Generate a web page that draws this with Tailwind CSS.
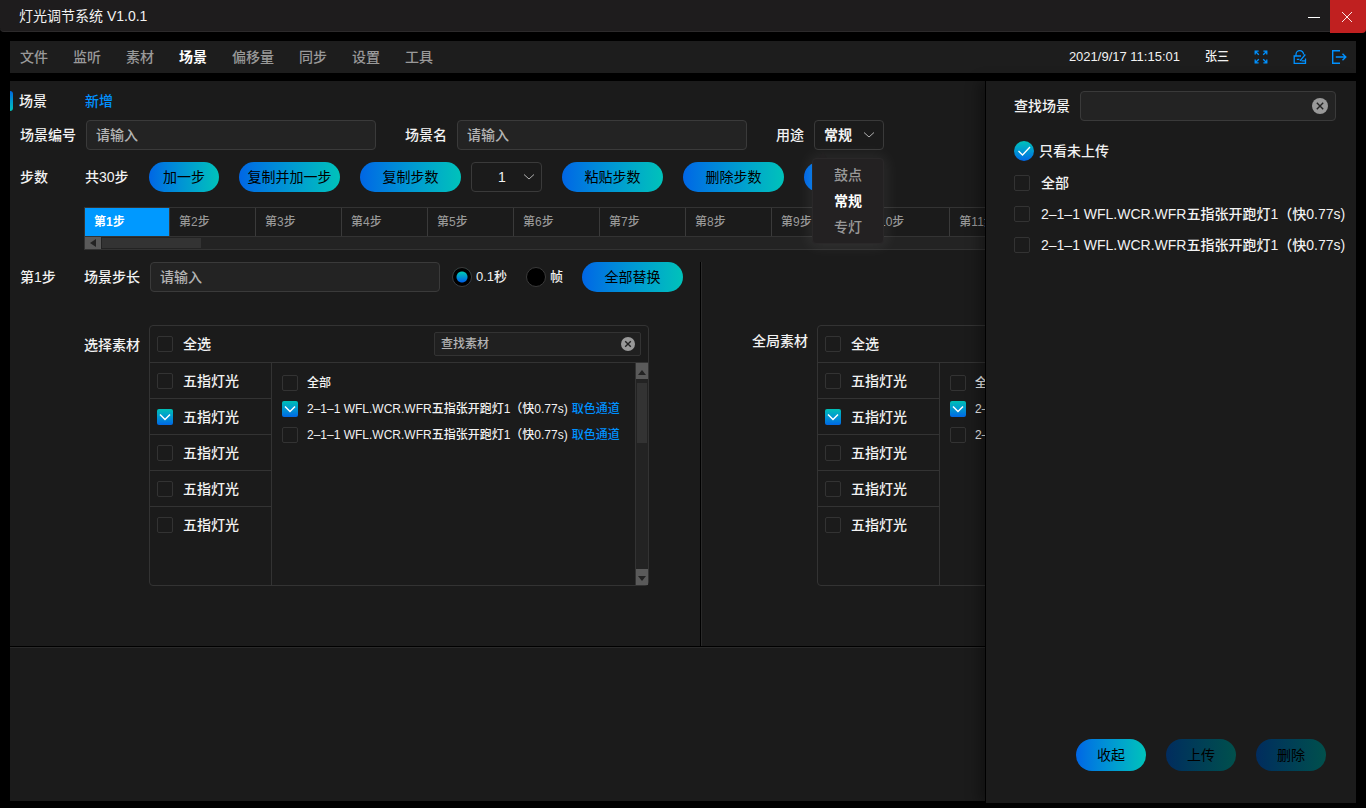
<!DOCTYPE html>
<html lang="zh-CN">
<head>
<meta charset="utf-8">
<meta name="viewport" content="width=device-width, initial-scale=1">
<title>灯光调节系统 V1.0.1</title>
<script src="https://cdn.jsdelivr.net/npm/@tailwindcss/browser@4"></script>
</head>
<body class="flex h-screen flex-col overflow-hidden bg-black font-['Liberation_Sans','Noto_Sans_CJK_SC',sans-serif] text-sm/5 font-medium text-[#f2f2f2]">

<header class="flex h-8 shrink-0 items-start justify-between rounded-b border-b border-[#2c2a2b] bg-[#1e1c1d]">
  <h1 class="pl-[19px] text-sm/8 font-normal">灯光调节系统 V1.0.1</h1>
  <div class="flex">
    <button type="button" aria-label="最小化" class="grid h-[33px] w-8 place-items-center">
      <span class="mt-0.5 h-px w-3 bg-white"></span>
    </button>
    <button type="button" aria-label="关闭" class="grid h-[33px] w-9 place-items-center rounded-br bg-[#c02020]">
      <svg class="mr-0.5 h-3 w-3" viewBox="0 0 12 12" fill="none" stroke="#fff" stroke-width="0.9"><path d="M1 1l10 10M11 1L1 11"/></svg>
    </button>
  </div>
</header>

<nav class="mx-2.5 mt-[9px] flex h-8 shrink-0 items-center justify-between bg-[#1d1d1d] pr-[9px] pl-2.5">
  <div class="flex gap-[25px] text-[#999]">
    <a href="#">文件</a><a href="#">监听</a><a href="#">素材</a><a href="#" class="font-bold text-white">场景</a><a href="#">偏移量</a><a href="#">同步</a><a href="#">设置</a><a href="#">工具</a>
  </div>
  <div class="flex items-center text-[13px]/5">
    <time>2021/9/17 11:15:01</time>
    <span class="ml-[25px] text-xs/5">张三</span>
    <button type="button" aria-label="全屏" class="ml-6 text-[#0091ff]">
      <svg class="h-4 w-4" viewBox="0 0 16 16" fill="none" stroke="currentColor" stroke-width="1.3"><path d="M2.200 5.600V2.200h3.400M2.200 2.200l3.600 3.600M10.400 2.200h3.400v3.400M13.800 2.200l-3.600 3.600M2.200 10.400v3.400h3.400M2.200 13.800l3.600-3.600M13.800 10.400v3.400h-3.400M13.800 13.800l-3.600-3.600"/></svg>
    </button>
    <button type="button" aria-label="修改密码" class="ml-[23px] text-[#0091ff]">
      <svg class="h-4 w-4" viewBox="0 0 16 16" fill="none" stroke="currentColor" stroke-width="1.300"><path d="M4 7V5.500a3.800 3.800 0 0 1 7.600 0M9 7H2.200v7.300h11.300V9.500M4.800 10.300h2.600M13.300 5.500L8 11.800M9.500 11.800H14"/></svg>
    </button>
    <button type="button" aria-label="退出" class="ml-[23px] text-[#0091ff]">
      <svg class="h-4 w-4" viewBox="0 0 16 16" fill="none" stroke="currentColor" stroke-width="1.400"><path d="M9 1.700H1.700v12.600H9M4.800 8h10M11.500 4.700L14.800 8l-3.300 3.300"/></svg>
    </button>
  </div>
</nav>

<main class="relative mx-2.5 mt-2 mb-[7px] flex min-h-0 flex-1 flex-col bg-[#1b1b1b]">
  <div class="flex min-h-0 flex-1 flex-col overflow-hidden pt-2.5">
    <div class="flex h-5 items-center">
      <span class="h-5 w-[3px] rounded-r-sm bg-linear-to-b from-[#0066e0] to-[#00c2b8]"></span>
      <h2 class="w-[72px] pl-1.5">场景</h2>
      <a href="#" class="text-[#0091ff]">新增</a>
    </div>

    <form class="mt-[9px] flex h-[30px] shrink-0 items-center pl-2.5">
      <label for="sceneNo" class="w-[66px]">场景编号</label>
      <input id="sceneNo" placeholder="请输入" class="h-[30px] w-[290px] rounded border border-[#3a3a3a] bg-[#232323] px-[9px] outline-none placeholder:text-[#b3b3b3]">
      <label for="sceneName" class="ml-[29px] w-[52px]">场景名</label>
      <input id="sceneName" placeholder="请输入" class="h-[30px] w-[290px] rounded border border-[#3a3a3a] bg-[#232323] px-[9px] outline-none placeholder:text-[#b3b3b3]">
      <label for="usage" class="ml-[29px] w-[38px]">用途</label>
      <div class="relative">
        <div class="grid items-center">
          <select id="usage" class="col-start-1 row-start-1 h-[30px] w-[70px] appearance-none rounded border border-[#3a3a3a] bg-[#1b1b1b] pl-[9px] font-bold outline-none"><option>鼓点</option><option selected>常规</option><option>专灯</option></select>
          <svg class="pointer-events-none col-start-1 row-start-1 mr-[9px] h-2 w-3 justify-self-end" viewBox="0 0 12 8" fill="none" stroke="#b0b0b0"><path d="M1 1.500l5 4.500 5-4.500"/></svg>
        </div>
        <div class="absolute top-8 -left-0.5 z-10 w-[72px] text-[#999]">
          <svg class="ml-[7px] h-1.5 w-2" viewBox="0 0 8 6" fill="#232122"><path d="M4 0l4 6H0z"/></svg>
          <ul class="rounded-sm border border-[#2a2829] bg-[#232122] py-[3px] text-center shadow-[0_0_16px_2px_rgba(255,255,255,0.08)]">
            <li class="leading-[26px]">鼓点</li>
            <li class="leading-[26px] font-bold text-white">常规</li>
            <li class="leading-[26px]">专灯</li>
          </ul>
        </div>
      </div>
    </form>

    <div class="mt-3 flex h-[30px] shrink-0 items-center pl-2.5">
      <span class="w-[65px]">步数</span>
      <span class="w-16">共30步</span>
      <button type="button" class="h-[30px] w-[70px] rounded-full bg-linear-to-r from-[#0066e5] to-[#00c2ba] font-normal text-black">加一步</button>
      <button type="button" class="ml-5 h-[30px] w-[101px] rounded-full bg-linear-to-r from-[#0066e5] to-[#00c2ba] font-normal text-black">复制并加一步</button>
      <button type="button" class="ml-5 h-[30px] w-[101px] rounded-full bg-linear-to-r from-[#0066e5] to-[#00c2ba] font-normal text-black">复制步数</button>
      <div class="ml-2.5 grid items-center">
        <select aria-label="复制数量" class="col-start-1 row-start-1 h-[30px] w-[71px] appearance-none rounded border border-[#3a3a3a] bg-[#1b1b1b] pl-[26px] outline-none"><option>1</option><option>2</option><option>3</option></select>
        <svg class="pointer-events-none col-start-1 row-start-1 mr-[7px] h-2 w-3 justify-self-end" viewBox="0 0 12 8" fill="none" stroke="#b0b0b0"><path d="M1 1.500l5 4.500 5-4.500"/></svg>
      </div>
      <button type="button" class="ml-5 h-[30px] w-[101px] rounded-full bg-linear-to-r from-[#0066e5] to-[#00c2ba] font-normal text-black">粘贴步数</button>
      <button type="button" class="ml-5 h-[30px] w-[101px] rounded-full bg-linear-to-r from-[#0066e5] to-[#00c2ba] font-normal text-black">删除步数</button>
      <button type="button" aria-label="更多" class="ml-5 h-[30px] w-[70px] rounded-full bg-linear-to-r from-[#0066e5] to-[#00c2ba]"></button>
    </div>

    <div class="mt-[15px] ml-[74px] shrink-0 overflow-hidden border border-[#333]">
      <div id="steps" class="flex h-7 text-xs/7 text-[#999]"></div>
      <div class="flex h-[13px] border-t border-[#333] bg-[#232323]">
        <button type="button" aria-label="向左滚动" class="grid h-3 w-4 place-items-center bg-[#5a5a5a]"><svg class="h-2 w-1.5" viewBox="0 0 6 8" fill="#232323"><path d="M6 0v8L0 4z"/></svg></button>
        <span class="mt-px ml-px h-2.5 w-[99px] bg-[#333]"></span>
      </div>
    </div>

    <div class="mt-3 flex shrink-0 border-b border-black">
      <section class="flex h-[384px] w-[691px] shrink-0 flex-col border-r border-black">
        <div class="flex h-[30px] items-center pl-2.5">
          <span class="w-16">第1步</span>
          <label for="stepLen" class="w-[66px]">场景步长</label>
          <input id="stepLen" placeholder="请输入" class="h-[30px] w-[290px] rounded border border-[#3a3a3a] bg-[#232323] px-[9px] outline-none placeholder:text-[#b3b3b3]">
          <label class="ml-3 flex w-[74px] items-center gap-1 text-[13px]/5"><input type="radio" name="unit" checked class="h-5 w-5 appearance-none rounded-full border border-[#3a3a3a] bg-[radial-gradient(circle,transparent_5px,#000_6px),linear-gradient(#00c2b8_25%,#0066e5_75%)]">0.1秒</label>
          <label class="flex w-14 items-center gap-1 text-[13px]/5"><input type="radio" name="unit" class="h-5 w-5 appearance-none rounded-full border border-[#3a3a3a] bg-black">帧</label>
          <button type="button" class="h-[30px] w-[101px] rounded-full bg-linear-to-r from-[#0066e5] to-[#00c2ba] font-normal text-black">全部替换</button>
        </div>
        <div class="mt-[33px] flex pl-[74px]">
          <span class="w-[65px] pt-2.5">选择素材</span>
          <div data-picker></div>
        </div>
      </section>
      <section class="min-w-0 flex-1 overflow-hidden border-l border-[#2a2a2a]">
        <div class="mt-[63px] flex pl-[50px]">
          <span class="w-[65px] shrink-0 pt-1.5">全局素材</span>
          <div data-picker></div>
        </div>
      </section>
    </div>
    <div class="flex-1 border-t border-[#2a2a2a]"></div>
  </div>

  <aside class="absolute top-0 right-0 -bottom-0.5 flex w-[371px] flex-col border-l border-black bg-[#1b1b1b] pt-2.5 shadow-[-6px_0_12px_rgba(0,0,0,0.35)]">
    <div class="flex items-center pr-5 pl-7">
      <label for="findScene" class="w-[66px]">查找场景</label>
      <div class="flex h-[30px] flex-1 items-center rounded border border-[#3a3a3a] bg-[#232323] pr-[7px] pl-[9px]">
        <input id="findScene" class="min-w-0 flex-1 bg-transparent outline-none">
        <button type="button" aria-label="清除"><svg class="h-4 w-4" viewBox="0 0 16 16"><circle cx="8" cy="8" r="8" fill="#999"/><path d="M4.800 4.800l6.400 6.400M11.200 4.800l-6.400 6.400" stroke="#232323" stroke-width="1.400"/></svg></button>
      </div>
    </div>
    <label class="mt-5 flex items-center gap-[5px] pl-7">
      <span class="grid">
        <input type="checkbox" checked class="col-start-1 row-start-1 h-5 w-5 appearance-none rounded-full bg-linear-to-b from-[#00c2b8] to-[#0066e5]">
        <svg class="pointer-events-none col-start-1 row-start-1 h-5 w-5" viewBox="0 0 20 20" fill="none" stroke="#fff" stroke-width="1.300"><path d="M4.500 10l4 4 7.500-8"/></svg>
      </span>只看未上传
    </label>
    <ul id="uploads" class="mt-1.5 pl-7"></ul>
    <div class="mt-auto flex justify-end gap-5 pr-[30px] pb-8">
      <button type="button" class="h-8 w-[70px] rounded-full bg-linear-to-r from-[#0066e5] to-[#00c2ba] font-normal text-black">收起</button>
      <button type="button" disabled class="h-8 w-[70px] rounded-full bg-linear-to-r from-[#022c5e] to-[#02504c] font-normal text-black">上传</button>
      <button type="button" disabled class="h-8 w-[70px] rounded-full bg-linear-to-r from-[#022c5e] to-[#02504c] font-normal text-black">删除</button>
    </div>
  </aside>
</main>

<script>
const effect = '2–1–1 WFL.WCR.WFR五指张开跑灯1（快0.77s)';
const box = on => `<span class="grid"><input type="checkbox" ${on ? 'checked' : ''} class="col-start-1 row-start-1 h-4 w-4 appearance-none rounded-xs border border-[#333] checked:border-0 checked:bg-linear-to-b checked:from-[#00bfb5] checked:to-[#0066e5]">${on ? '<svg class="pointer-events-none col-start-1 row-start-1 h-4 w-4" viewBox="0 0 16 16" fill="none" stroke="#fff" stroke-width="1.500"><path d="M3 5.500l5 5 5-5"/></svg>' : ''}</span>`;

document.getElementById('steps').innerHTML = Array.from({length: 11}, (_, i) =>
  `<button type="button" class="${i ? 'min-w-[86px] shrink-0 border-l border-[#3a3a3a] pr-[45px] pl-[9px] text-left' : 'w-[84px] shrink-0 bg-[#0099ff] pl-[9px] text-left font-bold text-white'}">第${i + 1}步</button>`).join('');

document.getElementById('uploads').innerHTML = ['全部', effect, effect].map(t =>
  `<li><label class="flex h-[31px] items-center gap-[11px] whitespace-nowrap">${box(false)}${t}</label></li>`).join('');

const link = '<a href="#" class="ml-1 text-[#0091ff]">取色通道</a>';
const picker = `
<div class="flex h-[261px] w-[500px] flex-col rounded border border-[#333]">
  <div class="flex h-[37px] shrink-0 items-center justify-between border-b border-[#333] pr-[7px] pl-[7px]">
    <label class="flex items-center gap-2.5">${box(false)}全选</label>
    <div class="flex h-6 w-[207px] items-center rounded-xs border border-[#333] bg-[#202020] pr-[5px] pl-1.5">
      <input aria-label="查找素材" placeholder="查找素材" class="min-w-0 flex-1 bg-transparent text-xs outline-none placeholder:text-[#b3b3b3]">
      <button type="button" aria-label="清除"><svg class="h-3.5 w-3.5" viewBox="0 0 16 16"><circle cx="8" cy="8" r="8" fill="#999"/><path d="M4.800 4.800l6.400 6.400M11.200 4.800l-6.400 6.400" stroke="#232323" stroke-width="1.600"/></svg></button>
    </div>
  </div>
  <div class="flex min-h-0 flex-1">
    <ul class="w-[122px] border-r border-[#333]">${[0, 1, 0, 0, 0].map(on =>
      `<li class="h-9 border-b border-[#333] pl-[7px] last:border-b-0"><label class="flex h-full items-center gap-2.5">${box(on)}五指灯光</label></li>`).join('')}</ul>
    <ul class="flex-1 pt-[7px] pl-2.5 text-xs/[26px]">
      <li><label class="flex items-center gap-[9px]">${box(0)}全部</label></li>
      <li class="flex"><label class="flex items-center gap-[9px] whitespace-nowrap">${box(1)}${effect}</label>${link}</li>
      <li class="flex"><label class="flex items-center gap-[9px] whitespace-nowrap">${box(0)}${effect}</label>${link}</li>
    </ul>
    <div class="flex w-[13px] flex-col border-l border-[#333] bg-[#232323]">
      <button type="button" aria-label="向上滚动" class="grid h-4 place-items-center bg-[#5a5a5a]"><svg class="mt-1 h-1.5 w-2" viewBox="0 0 8 6" fill="#232323"><path d="M0 5h8L4 0z"/></svg></button>
      <span class="mx-px mt-1 h-[60px] bg-[#333]"></span>
      <button type="button" aria-label="向下滚动" class="mt-auto grid h-4 place-items-center bg-[#5a5a5a]"><svg class="mt-1 h-1.5 w-2" viewBox="0 0 8 6" fill="#232323"><path d="M0 0h8L4 5z"/></svg></button>
    </div>
  </div>
</div>`;
document.querySelectorAll('[data-picker]').forEach(el => { el.innerHTML = picker; });
</script>
</body>
</html>
